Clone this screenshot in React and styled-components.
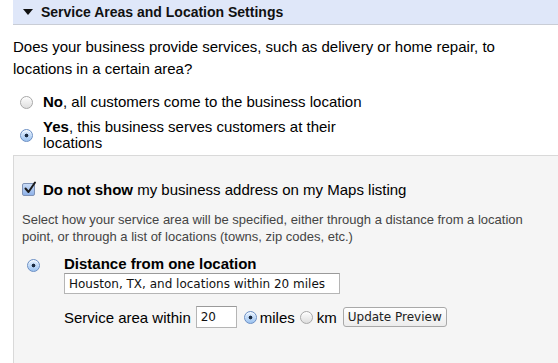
import React from 'react'
import styled, { createGlobalStyle } from 'styled-components'

const Global = createGlobalStyle`
  html, body { margin: 0; padding: 0; background: #fff; }
  body {
    font-family: 'Liberation Sans', Arial, sans-serif;
    color: #000;
    width: 558px;
    height: 363px;
    overflow: hidden;
  }
`

const Page = styled.div`
  padding-left: 13px;
`

const Header = styled.div`
  display: flex;
  align-items: center;
  gap: 8px;
  height: 24px;
  padding-left: 10px;
  background: #dfe7f9;
  border-bottom: 1px solid #c9cdd6;
  font-weight: bold;
  font-size: 14px;
  color: #111;
`

const Triangle = styled.span`
  width: 0;
  height: 0;
  border-left: 5px solid transparent;
  border-right: 5px solid transparent;
  border-top: 6px solid #111;
`

const Question = styled.p`
  margin: 11px 0 0;
  font-size: 15px;
  line-height: 22px;
`

const Options = styled.div`
  display: flex;
  flex-direction: column;
  gap: 9px;
  margin: 14px 0 0 7px;
`

const Option = styled.label`
  display: flex;
  align-items: center;
  gap: 10px;
  font-size: 15px;
  line-height: 16px;
`

const Radio = styled.span`
  display: inline-block;
  flex: none;
  width: 13px;
  height: 13px;
  border-radius: 50%;
  box-sizing: border-box;
  border: 1px solid ${p => (p.$on ? '#6b8fc4' : '#a8a8a8')};
  background: ${p =>
    p.$on
      ? 'radial-gradient(circle at 50% 50%, #1a2a40 0 1.6px, transparent 2.2px), linear-gradient(#e4f0ff, #9cc3f0)'
      : 'linear-gradient(#fdfdfd, #dedede)'};
  box-shadow: inset 0 1px 1px rgba(255,255,255,0.8);
`

const Panel = styled.div`
  margin-top: 4px;
  background: #f5f5f5;
  border-top: 1px solid #d9d9d9;
  border-left: 1px solid #d9d9d9;
  padding: 25px 0 40px 8px;
`

const CheckRow = styled.label`
  display: flex;
  align-items: center;
  gap: 8px;
  font-size: 15px;
`

const Check = styled.span`
  flex: none;
  width: 13px;
  height: 13px;
  box-sizing: border-box;
  border: 1px solid #7f92b5;
  border-radius: 2px;
  background: linear-gradient(#c9dcf7, #8fb2e8);
  position: relative;
  svg { position: absolute; left: 0; top: -3px; }
`

const Hint = styled.p`
  margin: 13px 0 0;
  font-size: 13px;
  line-height: 17px;
  color: #444;
`

const Method = styled.div`
  display: grid;
  grid-template-columns: 37px 1fr;
  margin: 10px 0 0 5px;
`

const MethodRadio = styled.div`
  padding-top: 3px;
`

const MethodBody = styled.div`
  display: flex;
  flex-direction: column;
`

const MethodTitle = styled.div`
  font-size: 15px;
  font-weight: bold;
  line-height: 18px;
`

const TextInput = styled.div`
  box-sizing: border-box;
  width: ${p => p.$w}px;
  height: ${p => p.$h}px;
  border: 1px solid #b5b5b5;
  border-top-color: #9a9a9a;
  background: #fff;
  padding: 0 4px;
  display: flex;
  align-items: center;
  font-family: 'DejaVu Sans', sans-serif;
  font-size: 12px;
  color: #111;
`

const AreaRow = styled.div`
  display: flex;
  align-items: center;
  margin-top: 12px;
  font-size: 15px;
`

const Gap = styled.span`
  display: inline-block;
  width: ${p => p.$w}px;
`

const Button = styled.button`
  height: 20px;
  padding: 0 4px;
  border: 1px solid #a9a9a9;
  border-radius: 3px;
  background: linear-gradient(#ffffff, #ececec);
  font-family: 'DejaVu Sans', sans-serif;
  font-size: 12px;
  color: #222;
`

export default function App() {
  return (
    <>
      <Global />
      <Page>
        <Header>
          <Triangle />
          Service Areas and Location Settings
        </Header>
        <Question>
          Does your business provide services, such as delivery or home repair, to locations in a certain area?
        </Question>
        <Options>
          <Option>
            <Radio />
            <span><b>No</b>, all customers come to the business location</span>
          </Option>
          <Option>
            <Radio $on />
            <span><b>Yes</b>, this business serves customers at their<br />locations</span>
          </Option>
        </Options>
        <Panel>
          <CheckRow>
            <Check>
              <svg width="14" height="14" viewBox="0 0 14 14">
                <path d="M2.5 7.5 L5.5 11 L12 1.5" fill="none" stroke="#1b1b1b" strokeWidth="2" strokeLinecap="round" strokeLinejoin="round" />
              </svg>
            </Check>
            <span><b>Do not show</b> my business address on my Maps listing</span>
          </CheckRow>
          <Hint>
            Select how your service area will be specified, either through a distance from a location point, or through a list of locations (towns, zip codes, etc.)
          </Hint>
          <Method>
            <MethodRadio><Radio $on /></MethodRadio>
            <MethodBody>
              <MethodTitle>Distance from one location</MethodTitle>
              <TextInput $w={276} $h={21}>Houston, TX, and locations within 20 miles</TextInput>
              <AreaRow>
                Service area within
                <Gap $w={5} />
                <TextInput $w={41} $h={22}>20</TextInput>
                <Gap $w={7} />
                <Radio $on />
                <Gap $w={3} />
                miles
                <Gap $w={5} />
                <Radio />
                <Gap $w={4} />
                km
                <Gap $w={6} />
                <Button>Update Preview</Button>
              </AreaRow>
            </MethodBody>
          </Method>
        </Panel>
      </Page>
    </>
  )
}
